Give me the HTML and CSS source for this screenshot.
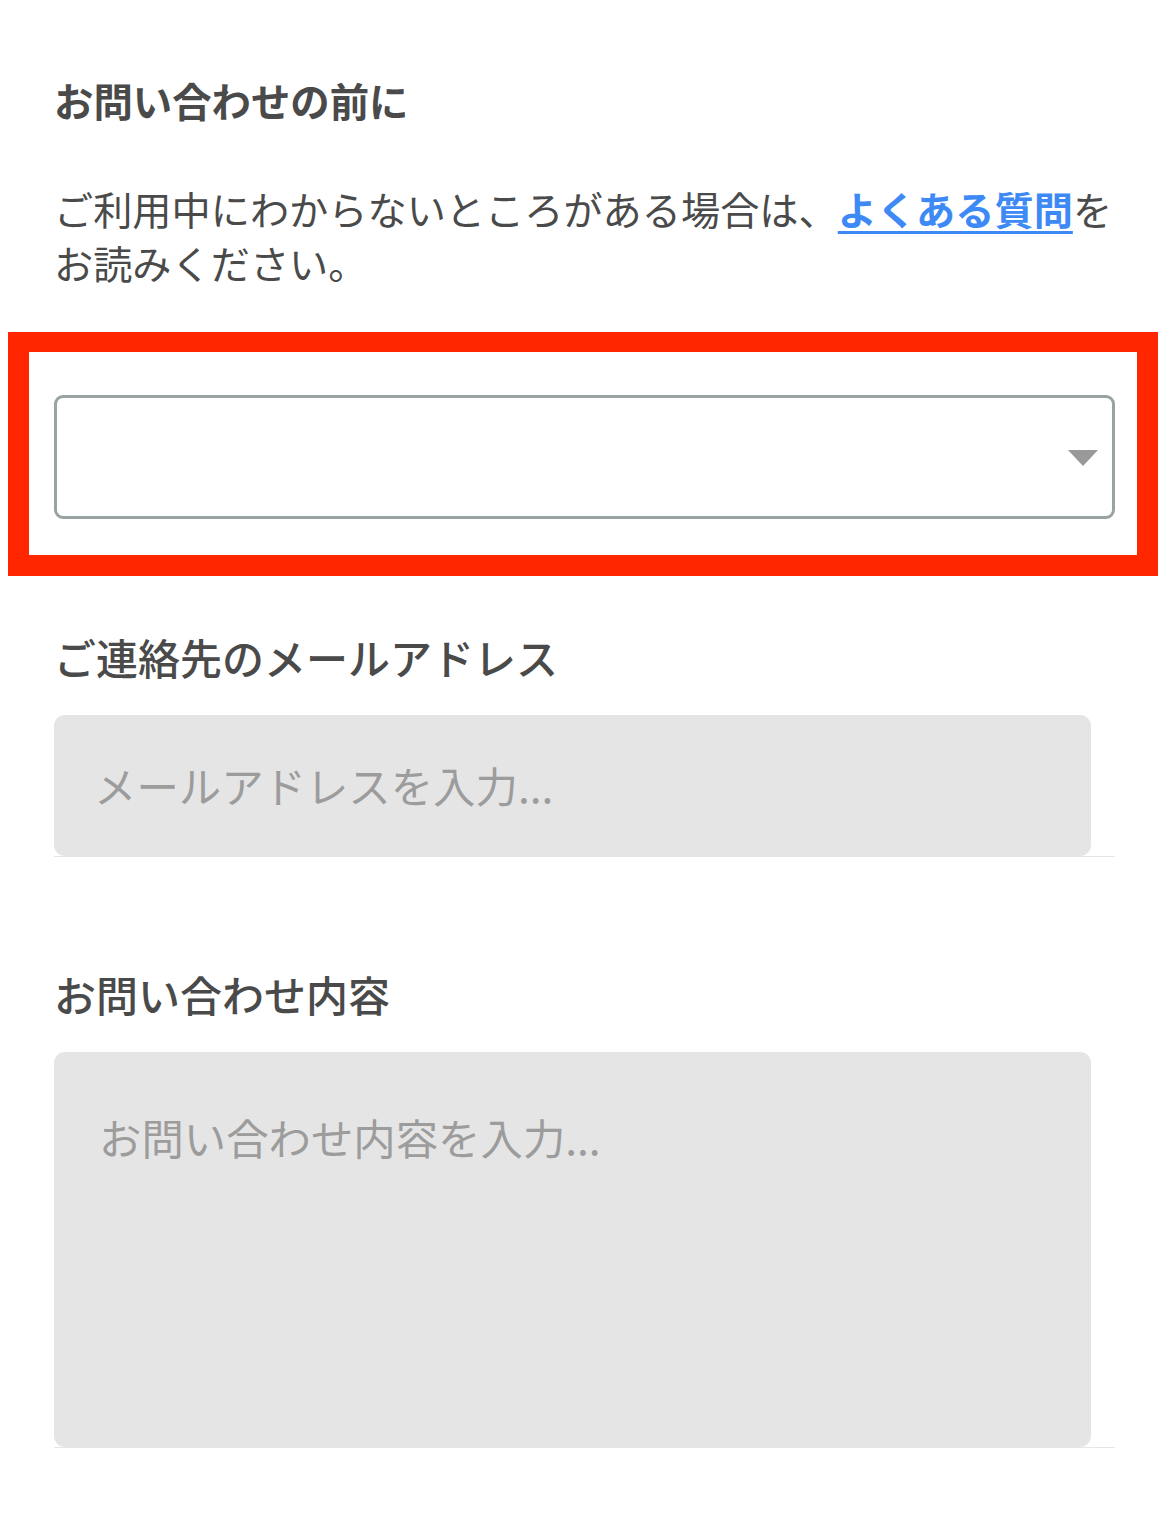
FILE: index.html
```html
<!DOCTYPE html>
<html lang="ja">
<head>
<meta charset="utf-8">
<title>お問い合わせ</title>
<link rel="stylesheet" href="styles.css">
</head>
<body>
<main class="page">
  <h1 class="title">お問い合わせの前に</h1>
  <p class="lead">ご利用中にわからないところがある場合は、<a class="faq" href="#">よくある質問</a>をお読みください。</p>

  <div class="select-wrap">
    <div class="select" role="combobox" aria-expanded="false">
      <svg class="caret" width="30" height="16" viewBox="0 0 30 16" aria-hidden="true"><path d="M0 0H30L15 16Z" fill="#999"/></svg>
    </div>
    <div class="highlight" aria-hidden="true"></div>
  </div>

  <h2 class="label label-mail">ご連絡先のメールアドレス</h2>
  <div class="field">
    <input class="input" type="email" placeholder="メールアドレスを入力...">
  </div>

  <h2 class="label label-body">お問い合わせ内容</h2>
  <div class="field">
    <textarea class="textarea" placeholder="お問い合わせ内容を入力..."></textarea>
  </div>
</main>
</body>
</html>
```

FILE: styles.css
```css
* { box-sizing: border-box; }

html, body {
  margin: 0;
  padding: 0;
  background: #ffffff;
}

body {
  font-family: "Noto Sans CJK JP", "Noto Sans", sans-serif;
  color: #4a4a4a;
}

.page {
  width: 1170px;
  padding: 73px 55px 60px 54px;
  display: flex;
  flex-direction: column;
}

.title {
  margin: 0;
  font-size: 39.4px;
  line-height: 54px;
  font-weight: 700;
  color: #4a4a4a;
}

.lead {
  margin: 54px 0 0;
  font-size: 39.2px;
  line-height: 54px;
  font-weight: 400;
  color: #4a4a4a;
}

.faq {
  color: #3d8af7;
  font-weight: 700;
  text-decoration: underline;
  text-decoration-thickness: 3px;
  text-underline-offset: 6px;
}

.select-wrap {
  position: relative;
  margin-top: 106px;
}

.select {
  height: 124px;
  border: 3px solid #9aa3a3;
  border-radius: 9px;
  background: #ffffff;
  display: flex;
  align-items: center;
  justify-content: flex-end;
  padding-right: 14px;
}

.caret {
  display: block;
  margin-top: 2px;
}

.highlight {
  position: absolute;
  top: -63px;
  bottom: -57px;
  left: -46px;
  right: -43px;
  border: 20px solid #ff2600;
  border-left-width: 21px;
  border-right-width: 21px;
  border-bottom-width: 21px;
  pointer-events: none;
}

.label {
  margin: 0;
  font-size: 42px;
  line-height: 60px;
  font-weight: 500;
  color: #4a4a4a;
}

.label-mail { margin-top: 108px; }
.label-body { margin-top: 107px; }

.field {
  margin-top: 28px;
  border-bottom: 1px solid #e6e6e6;
  display: flex;
}

.input,
.textarea {
  width: 1037px;
  border: none;
  outline: none;
  background: #e5e5e5;
  border-radius: 11px;
  font-family: "Noto Sans CJK JP", "Noto Sans", sans-serif;
  font-size: 42.4px;
  color: #4a4a4a;
  margin: 0;
}

.input {
  height: 141px;
  padding: 0 40px 2px 40px;
}

.textarea {
  height: 395px;
  padding: 61px 44px 0 45px;
  line-height: 48px;
  resize: none;
  display: block;
}

.input::placeholder,
.textarea::placeholder {
  color: #9c9c9c;
  opacity: 1;
}
```
